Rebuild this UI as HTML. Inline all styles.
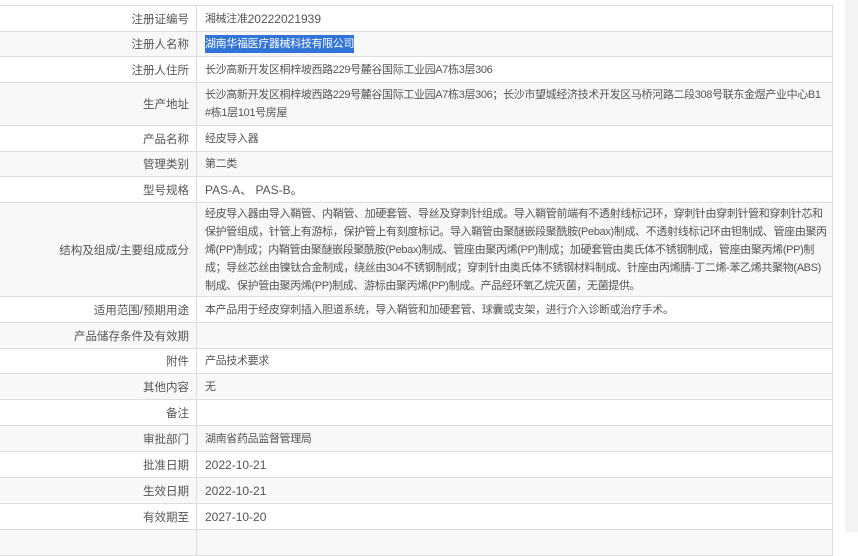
<!DOCTYPE html>
<html><head><meta charset="utf-8"><style>
body{margin:0;background:#fff;width:858px;height:532px;overflow:hidden;position:relative;font-family:"Liberation Sans","Noto Sans CJK SC",sans-serif;font-size:11px;color:#555}
.r{position:absolute;left:-1px;width:834px;border:1px solid #ddd;box-sizing:border-box;white-space:nowrap}
.g{background:#f8f8f8}
.l{position:absolute;left:0;top:0;bottom:0;width:197px;border-right:1px solid #ddd;display:flex;align-items:center;justify-content:flex-end;padding-right:7px;box-sizing:border-box;font-size:11.5px}
.v{position:absolute;left:205px;top:0;bottom:0;display:flex;align-items:center;line-height:18px;font-size:11px;letter-spacing:-0.35px}
.d{font-size:12px;letter-spacing:0}
.sel{background:#3173d6;color:#fff}
.sb{position:absolute;left:845px;top:0;width:13px;height:532px;background:#f3f3f3}
</style></head><body>
<div class="r" style="top:5px;height:27px"><div class="l">注册证编号</div><div class="v">湘械注准<span class="d">20222021939</span></div></div>
<div class="r g" style="top:31px;height:26px"><div class="l">注册人名称</div><div class="v"><span class="sel">湖南华福医疗器械科技有限公司</span></div></div>
<div class="r" style="top:56px;height:27px"><div class="l">注册人住所</div><div class="v">长沙高新开发区桐梓坡西路229号麓谷国际工业园A7栋3层306</div></div>
<div class="r g" style="top:82px;height:44px"><div class="l">生产地址</div><div class="v">长沙高新开发区桐梓坡西路229号麓谷国际工业园A7栋3层306；长沙市望城经济技术开发区马桥河路二段308号联东金煜产业中心B1<br>#栋1层101号房屋</div></div>
<div class="r" style="top:125px;height:27px"><div class="l">产品名称</div><div class="v">经皮导入器</div></div>
<div class="r g" style="top:151px;height:26px"><div class="l">管理类别</div><div class="v">第二类</div></div>
<div class="r" style="top:176px;height:27px"><div class="l">型号规格</div><div class="v"><span class="d">PAS-A、 PAS-B。</span></div></div>
<div class="r g" style="top:202px;height:95px"><div class="l">结构及组成/主要组成成分</div><div class="v">经皮导入器由导入鞘管、内鞘管、加硬套管、导丝及穿刺针组成。导入鞘管前端有不透射线标记环，穿刺针由穿刺针管和穿刺针芯和<br>保护管组成，针管上有游标，保护管上有刻度标记。导入鞘管由聚醚嵌段聚酰胺(Pebax)制成、不透射线标记环由钽制成、管座由聚丙<br>烯(PP)制成；内鞘管由聚醚嵌段聚酰胺(Pebax)制成、管座由聚丙烯(PP)制成；加硬套管由奥氏体不锈钢制成，管座由聚丙烯(PP)制<br>成；导丝芯丝由镍钛合金制成，绕丝由304不锈钢制成；穿刺针由奥氏体不锈钢材料制成、针座由丙烯腈-丁二烯-苯乙烯共聚物(ABS)<br>制成、保护管由聚丙烯(PP)制成、游标由聚丙烯(PP)制成。产品经环氧乙烷灭菌，无菌提供。</div></div>
<div class="r" style="top:296px;height:27px"><div class="l">适用范围/预期用途</div><div class="v">本产品用于经皮穿刺插入胆道系统，导入鞘管和加硬套管、球囊或支架，进行介入诊断或治疗手术。</div></div>
<div class="r g" style="top:322px;height:27px"><div class="l">产品储存条件及有效期</div><div class="v"></div></div>
<div class="r" style="top:348px;height:26px"><div class="l">附件</div><div class="v">产品技术要求</div></div>
<div class="r g" style="top:373px;height:27px"><div class="l">其他内容</div><div class="v">无</div></div>
<div class="r" style="top:399px;height:27px"><div class="l">备注</div><div class="v"></div></div>
<div class="r g" style="top:425px;height:27px"><div class="l">审批部门</div><div class="v">湖南省药品监督管理局</div></div>
<div class="r" style="top:451px;height:27px"><div class="l">批准日期</div><div class="v"><span class="d">2022-10-21</span></div></div>
<div class="r g" style="top:477px;height:27px"><div class="l">生效日期</div><div class="v"><span class="d">2022-10-21</span></div></div>
<div class="r" style="top:503px;height:27px"><div class="l">有效期至</div><div class="v"><span class="d">2027-10-20</span></div></div>
<div class="r g" style="top:529px;height:27px"><div class="l"></div><div class="v"></div></div>
<div class="sb"></div>
</body></html>
